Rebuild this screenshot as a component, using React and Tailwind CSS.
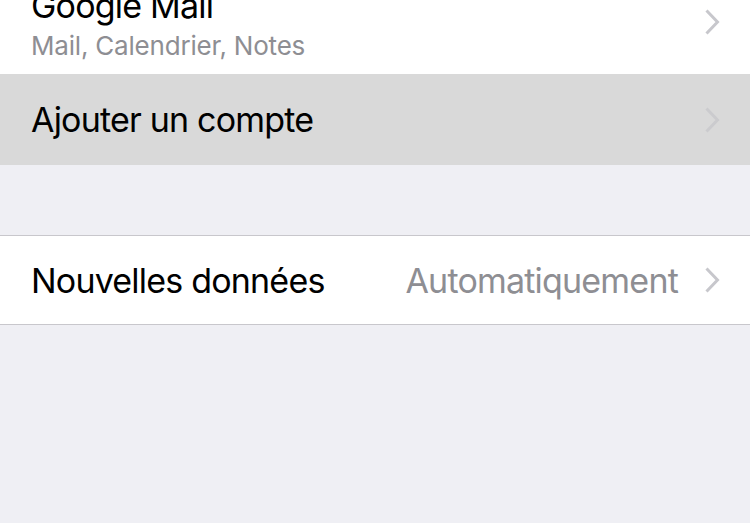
import React from "react";

function Chevron({ color = "#c7c7cc" }) {
  return (
    <svg width="16" height="26" viewBox="0 0 16 26" className="shrink-0">
      <path d="M2.5 1.5 L13.5 13 L2.5 24.5" fill="none" stroke={color} strokeWidth="3" strokeLinecap="butt" strokeLinejoin="miter" />
    </svg>
  );
}

export default function App() {
  return (
    <div
      className="w-[750px] h-[523px] overflow-hidden bg-[#efeff4]"
      style={{ fontFamily: "Inter, 'Noto Sans', sans-serif" }}
    >
      <div className="-mt-[30px] h-[104px] bg-white flex items-center pl-[31px] pr-[30px]">
        <div className="flex-1 self-stretch flex flex-col pt-[16px]">
          <div className="text-[34px] leading-[40px] text-black tracking-[-0.8px]">Google Mail</div>
          <div className="mt-[4px] text-[26px] leading-[32px] text-[#8e8e93] tracking-[-0.2px]">Mail, Calendrier, Notes</div>
        </div>
        <Chevron />
      </div>
      <div className="h-[91px] bg-[#d9d9d9] flex items-center pl-[31px] pr-[30px]">
        <div className="flex-1 text-[34px] text-black tracking-[-0.8px]">Ajouter un compte</div>
        <Chevron color="#cbcbce" />
      </div>
      <div className="h-[70px]" />
      <div className="h-[90px] bg-white border-y border-[#c8c7cc] flex items-center pl-[31px] pr-[30px]">
        <div className="flex-1 text-[34px] text-black tracking-[-0.8px]">Nouvelles données</div>
        <div className="text-[34px] text-[#8e8e93] tracking-[-0.8px] mr-[26px]">Automatiquement</div>
        <Chevron />
      </div>
    </div>
  );
}
